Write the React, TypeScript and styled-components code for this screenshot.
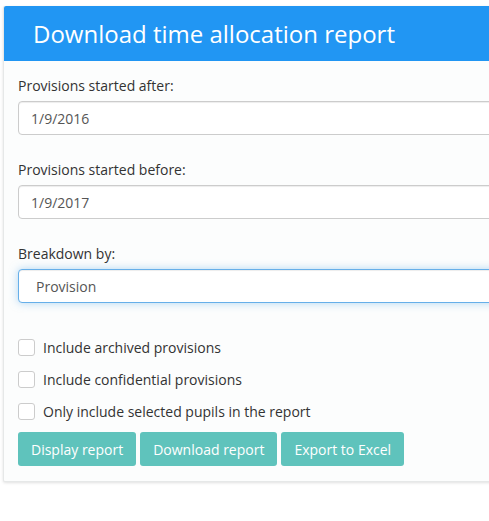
import React from "react";
import styled, { createGlobalStyle } from "styled-components";

const Global = createGlobalStyle`
  html, body { margin: 0; padding: 0; background: #fff; overflow: hidden; }
  body { font-family: "Open Sans", "Liberation Sans", sans-serif; font-size: 14px; color: #333; }
  * { box-sizing: border-box; }
`;

const Page = styled.div`
  padding: 6px 0 8px 3px;
  width: 100%;
  overflow: hidden;
`;

const Card = styled.div`
  width: 540px;
  background: #fcfdfd;
  border: 1px solid #e6e8e8;
  border-top: none;
  box-shadow: 0 1px 3px rgba(0, 0, 0, 0.12);
  border-radius: 2px;
`;

const Header = styled.div`
  background: #2196f3;
  height: 55px;
  display: flex;
  align-items: center;
  padding-left: 29px;
  border-radius: 2px 2px 0 0;
`;

const Title = styled.h2`
  margin: 0;
  font-size: 24px;
  font-weight: 400;
  color: #fff;
  line-height: 1;
`;

const Body = styled.div`
  padding: 15px 15px 15px 14px;
  display: flex;
  flex-direction: column;
`;

const Group = styled.div<{ $last?: boolean }>`
  display: flex;
  flex-direction: column;
  margin-bottom: ${(p) => (p.$last ? "0" : "25px")};
`;

const Label = styled.label`
  line-height: 20px;
  margin-bottom: 5px;
  color: #333;
`;

const Field = styled.div<{ $focused?: boolean }>`
  height: 34px;
  display: flex;
  align-items: center;
  padding-left: ${(p) => (p.$focused ? "17px" : "12px")};
  background: #fff;
  border: 1px solid ${(p) => (p.$focused ? "#66afe9" : "#ccc")};
  border-radius: 4px;
  color: #555;
  box-shadow: ${(p) =>
    p.$focused
      ? "inset 0 1px 1px rgba(0,0,0,.075), 0 0 8px rgba(102,175,233,.5)"
      : "inset 0 1px 1px rgba(0,0,0,.075)"};
`;

const Checks = styled.div`
  display: flex;
  flex-direction: column;
  gap: 12px;
  margin-top: 34px;
`;

const CheckRow = styled.label`
  display: flex;
  align-items: center;
  gap: 8px;
  height: 20px;
  color: #333;
`;

const Box = styled.span`
  width: 17px;
  height: 17px;
  border: 1px solid #ccc;
  border-radius: 3px;
  background: #fff;
`;

const Buttons = styled.div`
  display: flex;
  gap: 4px;
  margin-top: 11px;
`;

const Button = styled.button`
  height: 34px;
  padding: 0 13px;
  border: none;
  border-radius: 3px;
  background: #5fc3bc;
  color: #fff;
  font-family: inherit;
  font-size: 14px;
`;

export default function App() {
  return (
    <>
      <Global />
      <Page>
        <Card>
          <Header>
            <Title>Download time allocation report</Title>
          </Header>
          <Body>
            <Group>
              <Label>Provisions started after:</Label>
              <Field>1/9/2016</Field>
            </Group>
            <Group>
              <Label>Provisions started before:</Label>
              <Field>1/9/2017</Field>
            </Group>
            <Group $last>
              <Label>Breakdown by:</Label>
              <Field $focused>Provision</Field>
            </Group>
            <Checks>
              <CheckRow><Box />Include archived provisions</CheckRow>
              <CheckRow><Box />Include confidential provisions</CheckRow>
              <CheckRow><Box />Only include selected pupils in the report</CheckRow>
            </Checks>
            <Buttons>
              <Button>Display report</Button>
              <Button>Download report</Button>
              <Button>Export to Excel</Button>
            </Buttons>
          </Body>
        </Card>
      </Page>
    </>
  );
}
